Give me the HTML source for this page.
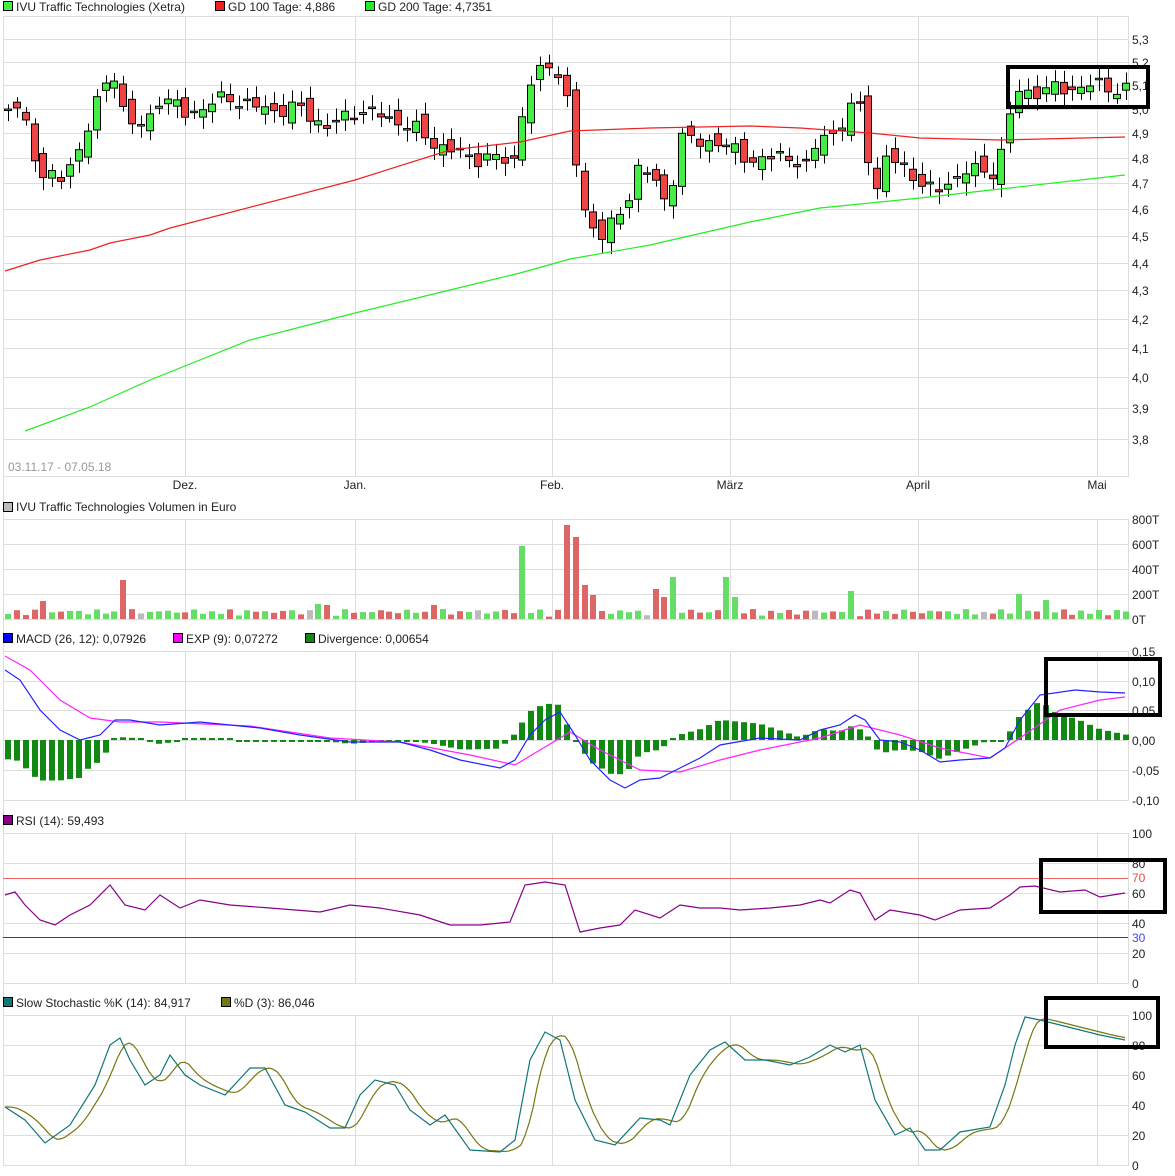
<!DOCTYPE html>
<html><head><meta charset="utf-8"><style>
body{margin:0;background:#fff;width:1175px;height:1176px;overflow:hidden}
svg{display:block}
text{font-family:"Liberation Sans",sans-serif;font-size:12px;fill:#222}
</style></head><body>
<svg id="s" width="1175" height="1176" xmlns="http://www.w3.org/2000/svg">
<g id="grid"></g>
<g id="content"></g>
<rect x="3.5" y="1.5" width="9" height="9" fill="#44ee44" stroke="#000"/><text x="16" y="11">IVU Traffic Technologies (Xetra)</text>
<rect x="215.5" y="1.5" width="9" height="9" fill="#ee2222" stroke="#000"/><text x="228" y="11">GD 100 Tage: 4,886</text>
<rect x="365.5" y="1.5" width="9" height="9" fill="#22ee22" stroke="#000"/><text x="378" y="11">GD 200 Tage: 4,7351</text>
<rect x="3.5" y="502.5" width="9" height="9" fill="#bbbbbb" stroke="#000"/><text x="16" y="511">IVU Traffic Technologies Volumen in Euro</text>
<rect x="3.5" y="633.5" width="9" height="9" fill="#0000ff" stroke="#000"/><text x="16" y="643">MACD (26, 12): 0,07926</text>
<rect x="173.5" y="633.5" width="9" height="9" fill="#ff00ff" stroke="#000"/><text x="186" y="643">EXP (9): 0,07272</text>
<rect x="305.5" y="633.5" width="9" height="9" fill="#118811" stroke="#000"/><text x="318" y="643">Divergence: 0,00654</text>
<rect x="3.5" y="815.5" width="9" height="9" fill="#880088" stroke="#000"/><text x="16" y="825">RSI (14): 59,493</text>
<rect x="3.5" y="997.5" width="9" height="9" fill="#117777" stroke="#000"/><text x="16" y="1007">Slow Stochastic %K (14): 84,917</text>
<rect x="221.5" y="997.5" width="9" height="9" fill="#777711" stroke="#000"/><text x="234" y="1007">%D (3): 86,046</text>
<text x="8" y="471" style="fill:#999">03.11.17 - 07.05.18</text>
<g id="labels"></g>
<g fill="none" stroke="#000" stroke-width="4">
<rect x="1008" y="67" width="140" height="40"/>
<rect x="1046" y="659" width="114" height="56"/>
<rect x="1041" y="860" width="124" height="52"/>
<rect x="1046" y="998" width="112" height="49"/>
</g>
</svg>
<script>
const NS="http://www.w3.org/2000/svg";
const G=document.getElementById('grid'),C=document.getElementById('content'),L=document.getElementById('labels');
function el(p,t,a,txt){const e=document.createElementNS(NS,t);for(const k in a)e.setAttribute(k,a[k]);if(txt!=null)e.textContent=txt;p.appendChild(e);return e;}
const X0=3,X1=1128;
const panels=[[16,476],[519,619],[651,800],[833,983],[1015,1165]];
const vx=[185,355,552,730,918,1097];
function py(p){return 39+1202*(Math.log(5.3)-Math.log(p));}
panels.forEach(([a,b])=>{
 el(G,'rect',{x:X0+.5,y:a+.5,width:X1-X0,height:b-a,fill:'none',stroke:'#ddd'});
 vx.forEach(x=>el(G,'line',{x1:x+.5,x2:x+.5,y1:a,y2:b,stroke:'#ddd'}));
});
el(G,'line',{x1:X0+.5,x2:X0+.5,y1:16,y2:1165,stroke:'#ddd'});
for(let v=3.8;v<=5.31;v+=0.1){const y=Math.round(py(v));el(G,'line',{x1:X0,x2:X1,y1:y+.5,y2:y+.5,stroke:'#ddd'});el(L,'text',{x:1132,y:y+5},v.toFixed(1).replace('.',','));}
['Dez.','Jan.','Feb.','März','April','Mai'].forEach((t,i)=>el(L,'text',{x:vx[i],y:489,'text-anchor':'middle'},t));
[[519,'800T'],[544,'600T'],[569,'400T'],[594,'200T'],[619,'0T']].forEach(([y,t])=>{el(G,'line',{x1:X0,x2:X1,y1:y+.5,y2:y+.5,stroke:'#ddd'});el(L,'text',{x:1132,y:y+5},t);});
[[651,'0,15'],[681,'0,10'],[710,'0,05'],[740,'0,00'],[770,'-0,05'],[800,'-0,10']].forEach(([y,t])=>{el(G,'line',{x1:X0,x2:X1,y1:y+.5,y2:y+.5,stroke:'#ddd'});el(L,'text',{x:1132,y:y+5},t);});
[[833,'100'],[863,'80'],[893,'60'],[923,'40'],[953,'20'],[983,'0']].forEach(([y,t])=>{el(G,'line',{x1:X0,x2:X1,y1:y+.5,y2:y+.5,stroke:'#ddd'});el(L,'text',{x:1132,y:y+5},t);});
el(L,'text',{x:1132,y:882,style:'fill:#e44'},'70');el(L,'text',{x:1132,y:942,style:'fill:#44f'},'30');
[[1015,'100'],[1045,'80'],[1075,'60'],[1105,'40'],[1135,'20'],[1165,'0']].forEach(([y,t])=>{el(G,'line',{x1:X0,x2:X1,y1:y+.5,y2:y+.5,stroke:'#ddd'});el(L,'text',{x:1132,y:y+5},t);});
el(C,'line',{x1:X0,x2:X1,y1:878.5,y2:878.5,stroke:'#ee6666'});
el(C,'line',{x1:X0,x2:X1,y1:937.5,y2:937.5,stroke:'#444'});
function interp(pts,x){if(x<=pts[0][0])return pts[0][1];for(let i=1;i<pts.length;i++){if(x<=pts[i][0]){const[a,b]=pts[i-1],[c,d]=pts[i];return b+(d-b)*(x-a)/(c-a);}}return pts[pts.length-1][1];}
function poly(pts,col,w){el(C,'polyline',{points:pts.map(p=>p.join(',')).join(' '),fill:'none',stroke:col,'stroke-width':w||1.2});}
const kp=[[8,5.0],[20,5.0],[40,4.75],[60,4.7],[80,4.85],[105,5.1],[118,5.17],[125,4.95],[140,4.92],[150,4.97],[160,5.06],[185,4.98],[230,5.05],[260,5.0],[300,5.0],[330,4.92],[355,5.0],[400,4.95],[440,4.85],[455,4.82],[500,4.79],[515,4.8],[525,5.05],[540,5.15],[552,5.22],[570,5.0],[580,4.6],[605,4.5],[625,4.6],[640,4.8],[668,4.6],[680,4.9],[700,4.85],[720,4.88],[740,4.8],[770,4.8],[800,4.8],[810,4.75],[820,4.9],[835,4.9],[850,5.0],[857,5.05],[865,4.9],[875,4.65],[885,4.8],[910,4.75],[935,4.65],[945,4.7],[965,4.75],[990,4.74],[1000,4.8],[1008,4.92],[1015,5.07],[1050,5.08],[1100,5.1],[1125,5.08]];
const N=127,cand=[];let prev=5.0;
for(let i=0;i<N;i++){const x=8+i*8.87;const c=interp(kp,x)+0.04*Math.sin(i*2.7)*Math.cos(i*1.3);const o=prev+0.03*Math.sin(i*1.9);const hi=Math.max(o,c)+0.02+0.03*Math.abs(Math.sin(i*3.1));const lo=Math.min(o,c)-0.02-0.03*Math.abs(Math.cos(i*2.3));cand.push({x,o,c,hi,lo});prev=c;}
cand.forEach(k=>{const up=k.c>=k.o;el(C,'line',{x1:Math.round(k.x)+.5,x2:Math.round(k.x)+.5,y1:py(k.hi),y2:py(k.lo),stroke:'#000'});
 const t=py(Math.max(k.o,k.c)),b=py(Math.min(k.o,k.c));el(C,'rect',{x:Math.round(k.x)-3.5,y:t,width:7,height:Math.max(1.5,b-t),fill:up?'#44ee44':'#ee4444',stroke:'#000'});});
poly([[5,271],[40,260],[90,250],[110,243],[150,235],[170,228],[355,180],[450,150],[520,142],[570,131],[650,128],[750,126],[800,128],[870,133],[920,138],[1000,140],[1125,137]],'#ee2222');
poly([[25,431],[90,407],[150,380],[250,340],[355,313],[450,290],[520,273],[570,259],[650,245],[750,222],[820,208],[920,198],[1000,189],[1125,175]],'#22ee22');
const vspikes={523:73,568:94,577:82,586:34,122:39,677:42,729:42,853:28,595:24,41:18,658:30,666:22,738:22,433:14,317:15,325:14,1016:25,1042:19};
cand.forEach((k,i)=>{let h=2+5*Math.abs(Math.sin(i*1.7))+3*Math.abs(Math.cos(i*0.9));for(const s in vspikes){if(Math.abs(k.x-s)<4.5)h=vspikes[s];}
 const col=(i%19==15)?'#bbbbbb':(k.c>=k.o?'#66dd66':'#dd6666');el(C,'rect',{x:Math.round(k.x)-3,y:619-h,width:6,height:h,fill:col});});
const blue=[[5,670],[20,680],[40,710],[60,730],[80,740],[100,735],[115,720],[130,720],[160,725],[200,722],[260,728],[300,735],[350,742],[400,742],[430,750],[460,760],[500,768],[515,760],[530,735],[545,720],[560,712],[575,735],[590,760],[610,780],[625,788],[640,780],[660,778],[680,768],[700,758],[720,745],[760,738],[800,740],[820,730],[840,725],[855,715],[865,720],[880,740],[900,742],[920,750],[940,762],[960,760],[990,758],[1005,748],[1020,720],[1040,695],[1075,690],[1100,692],[1125,693]];
const mag=[[5,656],[30,670],[60,700],[90,718],[120,722],[160,722],[250,726],[330,738],[400,742],[470,755],[515,765],[540,750],[570,732],[600,750],[640,770],[680,772],[720,760],[760,750],[820,738],[860,725],[900,735],[940,748],[990,758],[1020,738],[1060,710],[1100,700],[1125,697]];
cand.forEach(k=>{const d=(interp(mag,k.x)-interp(blue,k.x))*1.35;const y0=740;const h=Math.max(2,Math.abs(d));el(C,'rect',{x:Math.round(k.x)-3,y:d>0?y0-h:y0,width:6,height:h,fill:'#118811'});});
poly(mag,'#ff22ff');poly(blue,'#2222ff');
poly([[5,895],[15,892],[25,905],[40,920],[55,925],[70,915],[90,905],[110,885],[125,905],[145,910],[160,895],[180,908],[200,900],[230,905],[270,908],[320,912],[350,905],[380,908],[420,915],[435,920],[450,925],[480,925],[510,922],[525,885],[545,882],[565,885],[580,932],[600,928],[620,925],[635,910],[660,918],[680,905],[700,908],[720,908],[740,910],[770,908],[800,905],[820,900],[830,903],[850,890],[860,893],[875,920],[890,910],[920,915],[935,920],[960,910],[990,908],[1010,895],[1020,887],[1035,886],[1060,892],[1085,890],[1100,897],[1125,893]],'#880088');
const K=[[5,1107],[25,1120],[45,1143],[70,1125],[95,1085],[110,1045],[120,1038],[130,1060],[145,1085],[160,1075],[170,1055],[185,1075],[200,1085],[225,1095],[250,1068],[265,1068],[285,1105],[305,1112],[330,1128],[345,1128],[360,1095],[375,1080],[395,1085],[410,1110],[430,1125],[445,1115],[470,1150],[500,1152],[515,1140],[530,1060],[545,1032],[560,1040],[575,1100],[595,1140],[615,1145],[640,1118],[660,1120],[670,1125],[690,1075],[710,1050],[725,1042],[745,1060],[765,1060],[790,1065],[810,1057],[830,1045],[845,1052],[860,1045],[875,1100],[895,1135],[910,1128],[925,1150],[940,1150],[960,1132],[990,1127],[1005,1085],[1015,1045],[1025,1017],[1040,1020],[1060,1025],[1080,1030],[1100,1035],[1125,1040]];
const D=[];for(let x=5;x<=1125;x+=4){D.push([x,(interp(K,x-6)+interp(K,x-12)+interp(K,x-18))/3]);}
poly(D,'#777711');poly(K,'#117777');
</script>
</body></html>
